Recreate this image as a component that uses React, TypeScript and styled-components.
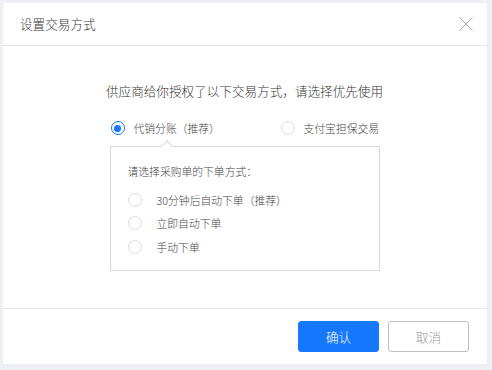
import React, { useState } from "react";
import styled, { createGlobalStyle } from "styled-components";

const Global = createGlobalStyle`
  html, body { margin: 0; padding: 0; }
  body {
    background: #eef0f5;
    font-family: "Noto Sans CJK SC", "Noto Sans", "Liberation Sans", sans-serif;
    font-weight: 300;
    color: #333;
  }
  * { box-sizing: border-box; }
`;

const Page = styled.div`
  width: 492px;
  height: 370px;
  padding: 3px 5px 6px 3px;
  background: #eef0f5;
`;

const Dialog = styled.div`
  width: 484px;
  height: 361px;
  background: #fff;
  display: flex;
  flex-direction: column;
  box-shadow: 0 0 1px rgba(0, 0, 0, 0.06);
`;

const Header = styled.div`
  height: 43px;
  flex: none;
  display: flex;
  align-items: center;
  justify-content: space-between;
  padding: 0 14px 0 17px;
  border-bottom: 1px solid #e6e6e6;
`;

const Title = styled.div`
  font-size: 12.6px;
  line-height: 18px;
  color: #333;
`;

const CloseBtn = styled.button`
  border: none;
  background: transparent;
  padding: 0;
  width: 14px;
  height: 14px;
  display: flex;
  cursor: pointer;
`;

const Body = styled.div`
  flex: 1;
  display: flex;
  flex-direction: column;
  align-items: center;
  padding-top: 35px;
`;

const Prompt = styled.div`
  font-size: 12.6px;
  line-height: 20px;
  color: #333;
  margin-left: -1px;
`;

const Column = styled.div`
  width: 270px;
  margin-left: -1px;
  display: flex;
  flex-direction: column;
`;

const ModeRow = styled.div`
  display: grid;
  grid-template-columns: 170px auto;
  margin-top: 17px;
  padding-left: 1px;
  height: 20px;
`;

const Option = styled.label<{ $gap: number; $size: number }>`
  display: flex;
  align-items: center;
  gap: ${(p) => p.$gap}px;
  font-size: ${(p) => p.$size}px;
  color: #444;
  cursor: pointer;
  white-space: nowrap;
`;

const Radio = styled.span<{ $checked: boolean }>`
  width: 14px;
  height: 14px;
  flex: none;
  border-radius: 50%;
  border: 1px solid ${(p) => (p.$checked ? "#1677ff" : "#dcdcdc")};
  background: #fff;
  display: flex;
  align-items: center;
  justify-content: center;
  &::after {
    content: "";
    width: 7px;
    height: 7px;
    border-radius: 50%;
    background: ${(p) => (p.$checked ? "#1677ff" : "transparent")};
  }
`;

const Popover = styled.div`
  position: relative;
  margin-top: 8px;
  height: 125px;
  border: 1px solid #d9d9d9;
  background: #fff;
  padding: 15px 0 0 17px;
  display: flex;
  flex-direction: column;
`;

const Caret = styled.span`
  position: absolute;
  top: -5px;
  left: 52px;
  width: 8px;
  height: 8px;
  background: #fff;
  border-left: 1px solid #d9d9d9;
  border-top: 1px solid #d9d9d9;
  transform: rotate(45deg);
`;

const PopTitle = styled.div`
  font-size: 10.8px;
  line-height: 18px;
  color: #444;
  margin-bottom: 8px;
`;

const OrderRow = styled.div`
  height: 23.5px;
  display: flex;
  align-items: center;
`;

const Footer = styled.div`
  height: 56px;
  flex: none;
  border-top: 1px solid #e6e6e6;
  display: flex;
  align-items: center;
  justify-content: flex-end;
  gap: 9px;
  padding-right: 18px;
`;

const Button = styled.button<{ $primary?: boolean }>`
  width: 81px;
  height: 31px;
  border-radius: 3px;
  font-family: inherit;
  font-weight: 300;
  font-size: 12.6px;
  cursor: pointer;
  border: 1px solid ${(p) => (p.$primary ? "#1677ff" : "#bdbdbd")};
  background: ${(p) => (p.$primary ? "#1677ff" : "#fff")};
  color: ${(p) => (p.$primary ? "#fff" : "#999")};
`;

const modes = ["代销分账（推荐）", "支付宝担保交易"];
const orders = ["30分钟后自动下单（推荐）", "立即自动下单", "手动下单"];

export default function App() {
  const [mode, setMode] = useState(0);
  const [order, setOrder] = useState(-1);
  return (
    <>
      <Global />
      <Page>
        <Dialog>
          <Header>
            <Title>设置交易方式</Title>
            <CloseBtn aria-label="关闭">
              <svg width="14" height="14" viewBox="0 0 14 14">
                <path d="M0.5 0.5 L13.5 13.5 M13.5 0.5 L0.5 13.5" stroke="#a8a8a8" strokeWidth="1" fill="none" />
              </svg>
            </CloseBtn>
          </Header>
          <Body>
            <Prompt>供应商给你授权了以下交易方式，请选择优先使用</Prompt>
            <Column>
              <ModeRow>
                {modes.map((m, i) => (
                  <Option key={m} $gap={9} $size={10.8} onClick={() => setMode(i)}>
                    <Radio $checked={mode === i} />
                    {m}
                  </Option>
                ))}
              </ModeRow>
              <Popover>
                <Caret />
                <PopTitle>请选择采购单的下单方式：</PopTitle>
                {orders.map((o, i) => (
                  <OrderRow key={o}>
                    <Option $gap={15} $size={10.8} onClick={() => setOrder(i)}>
                      <Radio $checked={order === i} />
                      {o}
                    </Option>
                  </OrderRow>
                ))}
              </Popover>
            </Column>
          </Body>
          <Footer>
            <Button $primary>确认</Button>
            <Button>取消</Button>
          </Footer>
        </Dialog>
      </Page>
    </>
  );
}
